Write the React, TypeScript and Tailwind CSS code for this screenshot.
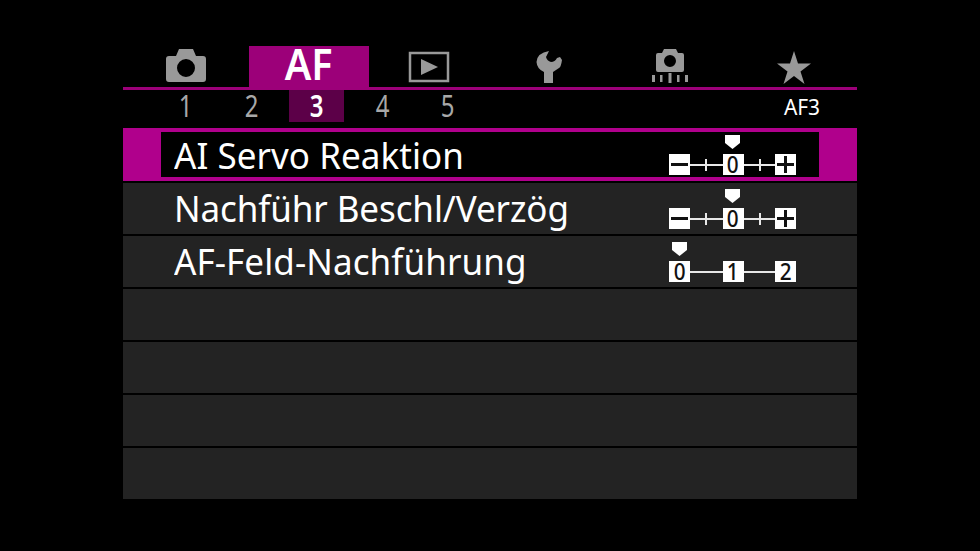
import type { ReactNode } from 'react'

const FONT = "font-['Noto_Sans',sans-serif]"

function CameraIcon() {
  return (
    <svg width="42" height="35" viewBox="0 0 42 35">
      <path
        fill="#999"
        fillRule="evenodd"
        d="M14 0h14l3 7h7a3 3 0 0 1 3 3v20a3 3 0 0 1-3 3H4a3 3 0 0 1-3-3V10a3 3 0 0 1 3-3h7zM21 10a9 9 0 1 0 0 18 9 9 0 0 0 0-18z"
      />
    </svg>
  )
}

function PlayIcon() {
  return (
    <svg width="42" height="33" viewBox="0 0 42 33">
      <rect x="2" y="2" width="38" height="28" fill="none" stroke="#999" strokeWidth="2.500" />
      <path fill="#999" d="M13 8l17 8-17 8z" />
    </svg>
  )
}

function WrenchIcon() {
  return (
    <svg width="26" height="34" viewBox="0 0 26 34">
      <path
        fill="#999"
        d="M13 1L10 7Q11 11 15 12Q19 12 21 8L24 7L26 10Q25 17 23 18L17 22V33H8V22Q1 19 0.500 12Q1 3 13 1z"
      />
    </svg>
  )
}

function CameraDotsIcon() {
  return (
    <svg width="38" height="36" viewBox="0 0 38 36">
      <path
        fill="#999"
        fillRule="evenodd"
        d="M13 1h12l2 4h4a2 2 0 0 1 2 2v15a2 2 0 0 1-2 2H7a2 2 0 0 1-2-2V7a2 2 0 0 1 2-2h4zM19 7a6 6 0 1 0 0 12 6 6 0 0 0 0-12z"
      />
      <path fill="#999" d="M1 27h3v7H1zM9 27h2.500v7H9zM17.500 25h3v10h-3zM26 27h2.500v7H26zM34 27h3v7h-3z" />
    </svg>
  )
}

function StarIcon() {
  return (
    <svg width="34" height="33" viewBox="0 0 34 33">
      <path fill="#999" d="M17 0l4 12.500h13L23.500 20.500 27.500 33 17 25 6.500 33l4-12.500L0 12.500h13z" />
    </svg>
  )
}

function Marker() {
  return (
    <svg width="15" height="14" viewBox="0 0 15 14" className="block">
      <path fill="#fff" d="M0 0h15v8l-7.500 6L0 8z" />
    </svg>
  )
}

function DialBox(props: { children: ReactNode }) {
  return (
    <div className="flex h-[21px] w-[21px] shrink-0 items-center justify-center bg-white text-[23px] leading-none font-medium text-[#111]">
      {typeof props.children === 'string' ? (
        <span className="inline-block scale-x-[0.9]">{props.children}</span>
      ) : (
        props.children
      )}
    </div>
  )
}

// connector between two boxes, with or without the small tick in the middle
function Connector(props: { tick?: boolean; width: string }) {
  return (
    <div className={`relative h-[2px] bg-[#e8e8e8] ${props.width}`}>
      {props.tick && <div className="absolute top-[-5px] left-[15px] h-[12px] w-[2px] bg-[#e8e8e8]" />}
    </div>
  )
}

function Dial(props: { labels: ReactNode[]; tick?: boolean; markerAt: 'start' | 'middle' }) {
  return (
    <div className="flex w-[127px] flex-col">
      <div className={`flex h-[19px] items-start ${props.markerAt === 'middle' ? 'pl-[56px]' : 'pl-[3px]'}`}>
        <Marker />
      </div>
      <div className="flex items-center">
        <DialBox>{props.labels[0]}</DialBox>
        <Connector tick={props.tick} width="w-[33px]" />
        <DialBox>{props.labels[1]}</DialBox>
        <Connector tick={props.tick} width="w-[32px]" />
        <DialBox>{props.labels[2]}</DialBox>
      </div>
    </div>
  )
}

function Minus() {
  return <div className="h-[3px] w-[17px] bg-[#111]" />
}

function Plus() {
  return (
    <div className="relative h-[17px] w-[17px]">
      <div className="absolute top-[7px] left-0 h-[3px] w-[17px] bg-[#111]" />
      <div className="absolute top-0 left-[7px] h-[17px] w-[3px] bg-[#111]" />
    </div>
  )
}

const tabs = [
  { w: 'w-[126px]', icon: <CameraIcon /> },
  { w: 'w-[120px]', label: 'AF' },
  { w: 'w-[120px]', icon: <PlayIcon /> },
  { w: 'w-[120px]', icon: <WrenchIcon /> },
  { w: 'w-[122px]', icon: <CameraDotsIcon /> },
  { w: 'w-[126px]', icon: <StarIcon /> },
]

const subTabs = ['1', '2', '3', '4', '5']

export default function App() {
  const stepped = [<Minus key="a" />, '0', <Plus key="b" />]

  return (
    <div className={`h-[551px] w-[980px] overflow-hidden bg-black pt-[46px] pl-[123px] ${FONT}`}>
      <div className="w-[734px]">
        <div className="flex h-[41px] items-stretch">
          {tabs.map((tab, i) => (
            <div
              key={i}
              className={`flex items-end justify-center pb-[3px] ${tab.w} ${tab.label ? 'bg-[#9c0079]' : ''}`}
            >
              {tab.icon}
              {tab.label && (
                <span className="inline-block scale-x-[0.9] text-[44px] leading-[41px] font-semibold text-white">
                  {tab.label}
                </span>
              )}
            </div>
          ))}
        </div>
        <div className="h-[3px] bg-[#9c0079]" />

        <div className="flex h-[32px] items-stretch pl-[30px]">
          {subTabs.map((n) => (
            <div key={n} className="flex w-[65.500px] justify-center">
              <div
                className={`flex w-[55px] items-center justify-center text-[30px] leading-none ${
                  n === '3' ? 'bg-[#5c0048] font-semibold text-white' : 'text-[#a8a8a8]'
                }`}
              >
                <span className="inline-block scale-x-[0.8]">{n}</span>
              </div>
            </div>
          ))}
          <div className="ml-auto flex items-center pr-[37px] text-[22px] text-white">
            <span className="inline-block origin-right scale-x-[0.95]">AF3</span>
          </div>
        </div>

        <div className="mt-[6px] flex flex-col gap-[2px]">
          <div className="h-[53px] bg-[#b0008c] px-[38px] py-[4px]">
            <div className="flex h-[45px] items-start bg-black">
              <div className="flex h-[45px] w-[508px] items-center pl-[13px] text-[37px] leading-none tracking-[0.05px] whitespace-nowrap text-white">
                <span className="inline-block origin-left scale-x-[0.946]">AI Servo Reaktion</span>
              </div>
              <div className="pt-[3px]">
                <Dial labels={stepped} tick markerAt="middle" />
              </div>
            </div>
          </div>

          <Row label="Nachführ Beschl/Verzög" tracking="tracking-[-0.1px]">
            <Dial labels={stepped} tick markerAt="middle" />
          </Row>
          <Row label="AF-Feld-Nachführung" tracking="tracking-[0.1px]">
            <Dial labels={['0', '1', '2']} markerAt="start" />
          </Row>
          <Row />
          <Row />
          <Row />
          <Row />
        </div>
      </div>
    </div>
  )
}

function Row(props: { label?: string; tracking?: string; children?: ReactNode }) {
  return (
    <div className="flex h-[51px] items-start bg-[#232323]">
      <div
        className={`flex h-[49px] w-[546px] items-center pl-[51px] text-[37px] leading-none whitespace-nowrap text-white ${props.tracking ?? ''}`}
      >
        <span className="inline-block origin-left scale-x-[0.946]">{props.label}</span>
      </div>
      <div className="pt-[6px]">{props.children}</div>
    </div>
  )
}
